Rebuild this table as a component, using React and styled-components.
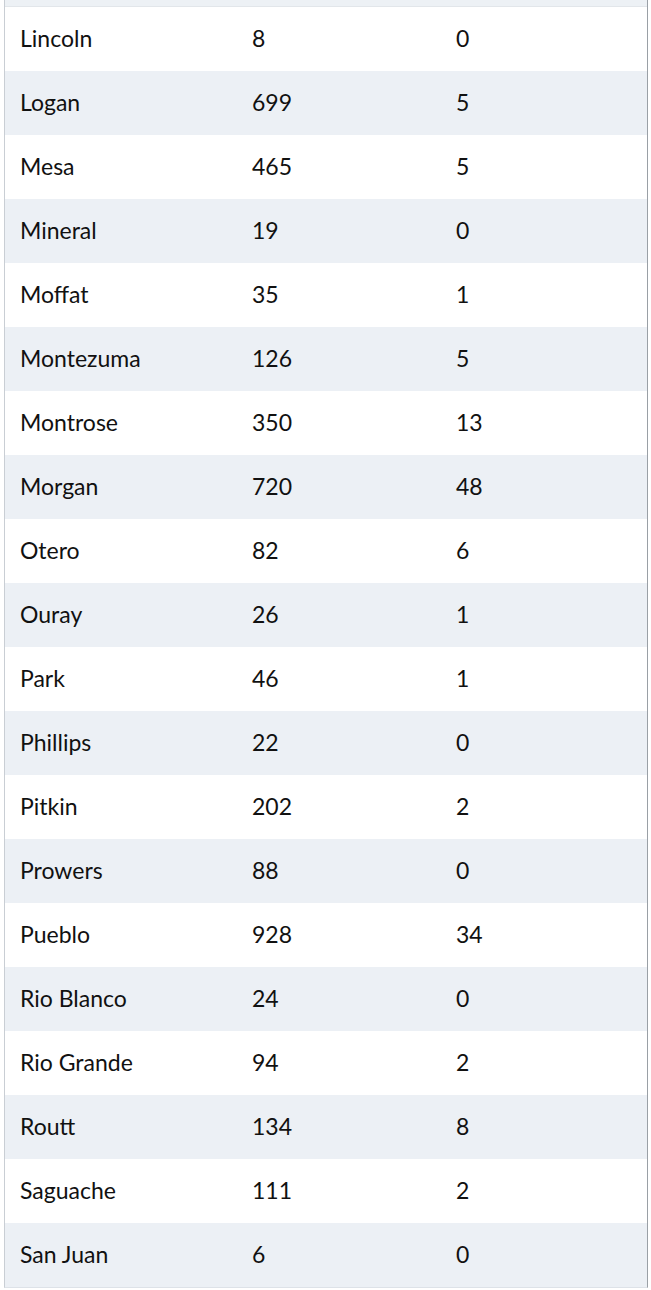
import React from "react";
import styled, { createGlobalStyle } from "styled-components";

const GlobalStyle = createGlobalStyle`
  body {
    margin: 0;
    background: #fff;
    font-family: Lato, "Open Sans", sans-serif;
  }
`;

const Page = styled.div`
  width: 651px;
  height: 1290px;
  overflow: hidden;
  background: #fff;
`;

const TableWrap = styled.div`
  margin-left: 4px;
  width: 642px;
  border-left: 1px solid #c9ced4;
  border-right: 1px solid #9aa0a6;
  border-bottom: 1px solid #dde2e8;
`;

const TopStrip = styled.div`
  height: 6px;
  background: #edf1f5;
  border-bottom: 1px solid #e2e6ea;
`;

const Row = styled.div`
  display: grid;
  grid-template-columns: 232px 204px 1fr;
  align-items: center;
  height: 64px;
  padding-bottom: 2px;
  box-sizing: border-box;
  background: ${(p) => (p.$striped ? "#ecf0f5" : "#ffffff")};
`;

const Cell = styled.div`
  padding-left: 15px;
  font-size: 23px;
  color: #111;
  white-space: nowrap;
`;

const rows = [
  ["Lincoln", 8, 0],
  ["Logan", 699, 5],
  ["Mesa", 465, 5],
  ["Mineral", 19, 0],
  ["Moffat", 35, 1],
  ["Montezuma", 126, 5],
  ["Montrose", 350, 13],
  ["Morgan", 720, 48],
  ["Otero", 82, 6],
  ["Ouray", 26, 1],
  ["Park", 46, 1],
  ["Phillips", 22, 0],
  ["Pitkin", 202, 2],
  ["Prowers", 88, 0],
  ["Pueblo", 928, 34],
  ["Rio Blanco", 24, 0],
  ["Rio Grande", 94, 2],
  ["Routt", 134, 8],
  ["Saguache", 111, 2],
  ["San Juan", 6, 0],
];

export default function App() {
  return (
    <Page>
      <GlobalStyle />
      <TableWrap>
        <TopStrip />
        {rows.map(([county, cases, deaths], i) => (
          <Row key={county} $striped={i % 2 === 1}>
            <Cell>{county}</Cell>
            <Cell>{cases}</Cell>
            <Cell>{deaths}</Cell>
          </Row>
        ))}
      </TableWrap>
    </Page>
  );
}
